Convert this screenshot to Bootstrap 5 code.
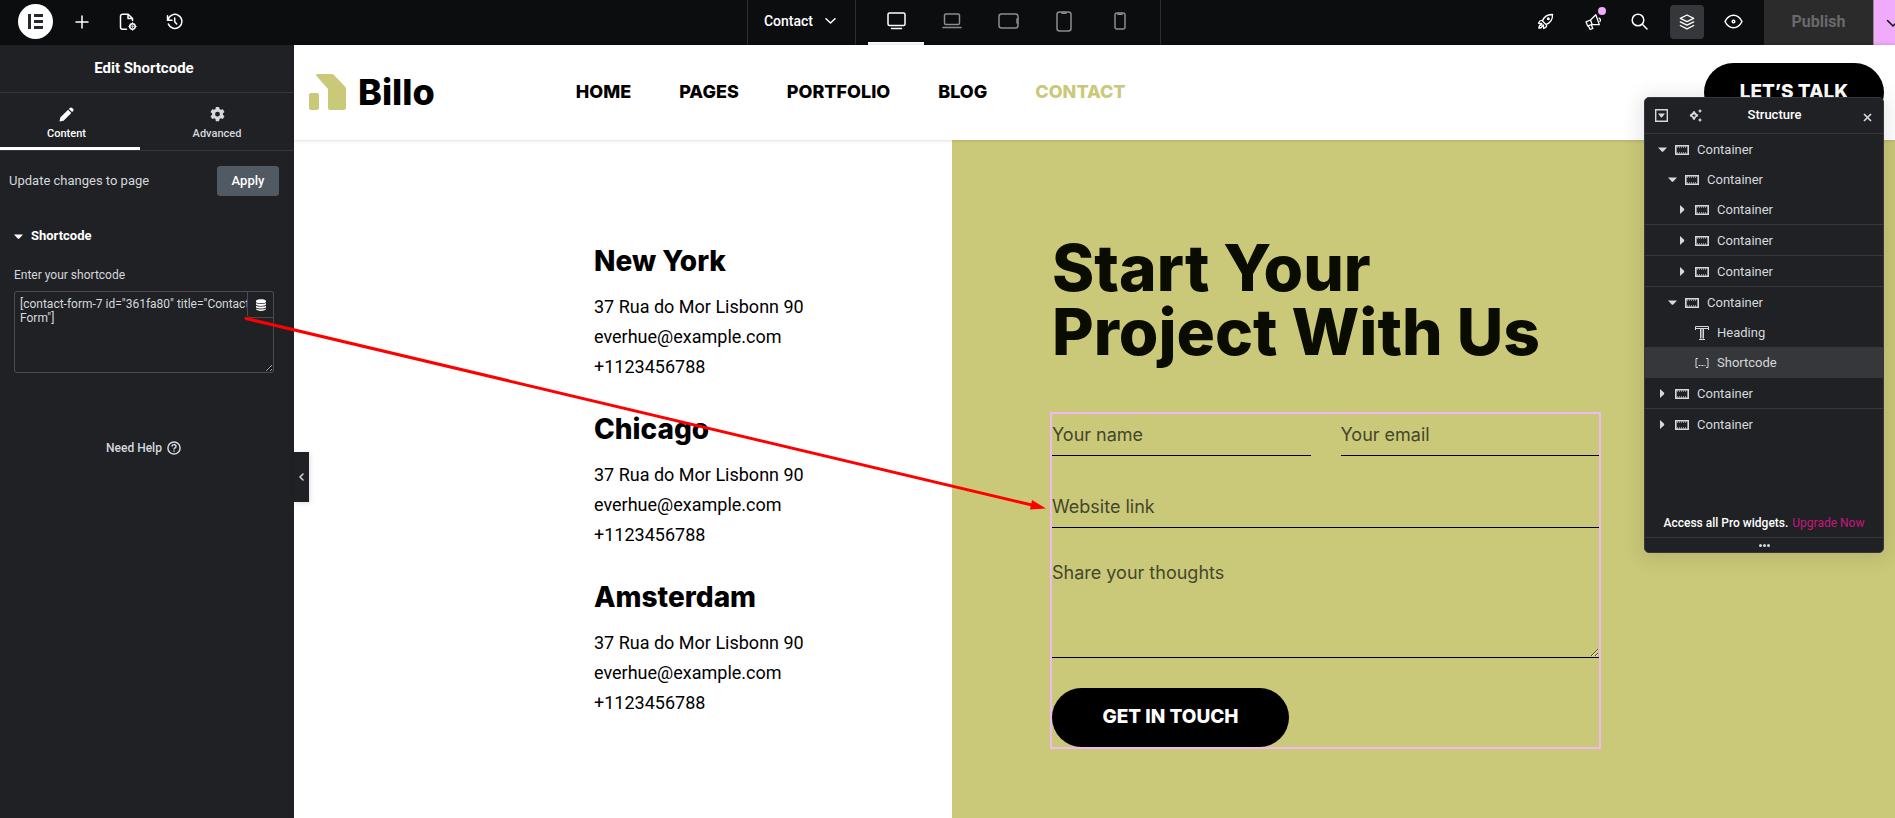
<!DOCTYPE html>
<html lang="en">
<head>
<meta charset="utf-8">
<meta name="viewport" content="width=device-width, initial-scale=1">
<title>Contact – Editor</title>
<link href="https://cdn.jsdelivr.net/npm/bootstrap@5.3.0/dist/css/bootstrap.min.css" rel="stylesheet">
<style>
:root { --olive:#cac979; --panel:#1f2124; --line:#35373b; --soft:#d5d8dc; --pink:#f0abfc; }
body { font-family:Roboto,"Liberation Sans",sans-serif; font-size:13px; color:#000; background:#fff; }
button { background:none; border:0; padding:0; color:inherit; }
a { color:inherit; text-decoration:none; }
svg { display:block; flex:none; }
.stroke-icon { fill:none; stroke:currentColor; stroke-width:1.5; stroke-linecap:round; stroke-linejoin:round; }
.wide-face { font-family:Inter,"Liberation Sans",sans-serif; font-weight:800; }

/* top bar */
.topbar { display:grid; grid-template-columns:747fr 414px 734fr; height:45px; background:#0c0d0e; color:#fff; overflow:hidden; }
.topbar-start { padding-left:18px; }
.tool { width:46px; height:43px; display:flex; align-items:center; justify-content:center; }
.brand-dot { width:35px; height:35px; margin-right:6px; }
.page-picker { width:109px; font-size:14px; font-weight:500; border:solid #2d2e30; border-width:0 1px; padding:3px 0 8px 5px; }
.devices { border-right:1px solid #2d2e30; padding-left:12px; }
.device { width:56px; height:45px; display:flex; align-items:center; justify-content:center; color:#8b8c8e; border-bottom:3px solid transparent; }
.device.active { color:#fff; border-color:#fff; }
.right-tools { margin-right:7px; }
.right-tool { width:47px; }
.tool-on { width:34px; height:34px; border-radius:4px; background:#36373a; }
.note-dot { position:absolute; top:7px; right:10px; width:8px; height:8px; border-radius:50%; background:var(--pink); }
.publish { width:109px; background:#2b2b2b; color:#69696b; font-size:16px; font-weight:700; padding-bottom:4px; }
.publish-more { width:22px; background:var(--pink); border-left:1px solid #8f8f90; color:#0c0d0e; overflow:hidden; padding-left:12px; }

/* side panel */
.side { width:294px; background:var(--panel); color:var(--soft); flex:none; position:relative; }
.side-title { height:48px; font-size:15px; font-weight:700; color:#fff; border-bottom:1px solid var(--line); padding-right:6px; }
.side-tabs { height:58px; border-bottom:1px solid var(--line); }
.side-tab { height:57px; flex:1; font-size:11px; font-weight:500; border-bottom:3px solid transparent; padding-bottom:5px; }
.side-tab.first { flex:0 0 140px; color:#fff; border-color:#fff; padding-right:7px; }
.apply { width:62px; height:30px; border-radius:3px; background:#515962; color:#fff; font-weight:500; font-size:13px; }
.update-row { padding:15px 15px 0 9px; font-size:13px; }
.section-head { color:#fff; font-weight:700; font-size:13px; line-height:20px; padding-left:14px; margin-top:30px; }
.code-label { font-size:12px; line-height:18px; margin:20px 0 7px 14px; display:block; }
.code-wrap { position:relative; margin:0 20px 0 14px; }
.code-area { width:100%; height:82px; background:transparent; border:1px solid #494b50; border-radius:3px; color:var(--soft); font-size:12px; line-height:14px; padding:5px; display:block; resize:vertical; overflow:hidden; outline:0; }
.code-btn { position:absolute; top:0; right:0; width:27px; height:27px; border:1px solid #494b50; border-radius:0 3px 0 3px; background:var(--panel); color:#fff; }
.help { margin-top:66px; font-size:12px; font-weight:500; padding-right:7px; gap:5px; }
.collapse-tab { position:absolute; left:294px; top:407px; width:15px; height:50px; background:var(--panel); color:var(--soft); z-index:3; box-shadow:1px 1px 5px #0002; }

/* edited site */
.site { min-width:0; position:relative; }
.site-head { height:95px; padding:0 11px 0 15px; box-shadow:0 0 4px #0003; position:relative; z-index:1; background:#fff; }
.site-name { font-size:36px; line-height:36px; }
.site-nav { font-size:18px; gap:48px; padding-left:141px; }
.site-nav .current { color:var(--olive); }
.brand-row { padding-bottom:2px; }
.talk, .send { background:#000; color:#fff; border-radius:30px; height:59px; font-size:19px; }
.talk { width:180px; }
.send { width:237px; margin-top:30px; }
.addresses { flex:0 0 41.1%; padding:106px 20px 60px 300px; }
.addresses h2 { font-size:28px; line-height:30px; margin:0 0 16px; }
.addresses address { font-size:18px; line-height:30px; margin:0 0 32px; }
.pitch { flex:1; background:var(--olive); padding:96px 40px 69px 98px; }
.pitch h1 { font-size:64px; line-height:64px; color:#0a0c00; margin:0 0 48px 2px; }
.contact-form { border:2px solid #efb9f3; max-width:551px; }
.field-row { gap:30px; }
.field { width:100%; background:transparent; border:0; border-bottom:1px solid #000; border-radius:0; outline:0; font:400 18px/27px Inter,sans-serif; height:42px; padding:0; display:block; color:#000; }
.field::placeholder { color:#45462b; opacity:1; }
.field-row, .field-gap { margin-bottom:30px; }
textarea.field { height:100px; padding-top:1px; resize:vertical; }

/* structure panel */
.structure { position:absolute; right:11px; top:97px; width:240px; height:456px; z-index:5; background:var(--panel); color:var(--soft); border:1px solid #35373b; border-radius:5px; box-shadow:0 2px 20px 4px #0000001a; overflow:hidden; }
.structure-head { height:36px; border-bottom:1px solid var(--line); padding:0 11px 1px 10px; }
.structure-title { font-size:13px; font-weight:500; color:#fff; flex:1; padding-right:16px; }
.smart { margin-left:21px; }
.node { height:30px; font-size:13px; padding:1px 0 0 13px; width:100%; gap:8px; }
.node.lined { height:31px; border-bottom:1px solid var(--line); }
.node.level-2 { padding-left:23px; }
.node.level-3 { padding-left:33px; }
.node.selected { background:#36373b; }
.upsell { font-size:12px; height:32px; color:#fff; font-weight:500; padding-top:3px; }
.upsell a { color:#c9167c; font-weight:400; }
.grip { height:15px; border-top:1px solid var(--line); }
.pointer-line { position:absolute; left:244px; top:315px; z-index:4; pointer-events:none; }
</style>
</head>
<body>
<svg width="0" height="0" class="position-absolute" aria-hidden="true">
  <symbol id="box" viewBox="0 0 14 10"><path fill="none" stroke="currentColor" stroke-width="1.600" d="M.8.8h12.4v8.4H.8z"/><path fill="none" stroke="currentColor" stroke-dasharray="1 1" d="M2 2.100h10M2 7.900h10"/></symbol>
  <symbol id="down" viewBox="0 0 9 9"><path fill="currentColor" d="M0 2.500h9L5.500 6.300a1.400 1.400 0 0 1-2 0z"/></symbol>
  <symbol id="right" viewBox="0 0 9 9"><path fill="currentColor" d="M2 0v9l3.800-3.500a1.400 1.400 0 0 0 0-2z"/></symbol>
</svg>

<div class="position-relative min-vh-100 d-flex flex-column">
<header class="topbar">
  <div class="topbar-start d-flex">
    <div class="d-flex align-items-center pb-1">
      <button class="brand-dot" aria-label="Menu"><svg width="35" height="35" viewBox="0 0 35 35"><circle cx="17.500" cy="17.500" r="17.500" fill="#fff"/><path fill="#26282b" d="M10 10h3v15h-3zM16 10h9v3h-9zM16 16h9v3h-9zM16 22h9v3h-9z"/></svg></button>
      <button class="tool" aria-label="Add element"><svg class="stroke-icon" width="14" height="14" viewBox="0 0 14 14"><path d="M7 1v12M1 7h12"/></svg></button>
      <button class="tool" aria-label="Page settings"><svg class="stroke-icon" width="18" height="18" viewBox="0 0 18 18"><path d="M7.500 16.300H3.500a2 2 0 0 1-2-2V3.200a2 2 0 0 1 2-2h5.700l4.300 4.300v2M9 1.500v4h4.500"/><circle cx="13.500" cy="13.500" r="2.700"/><circle cx="13.500" cy="13.500" r=".4"/><path stroke-width="1" d="M13.500 9.800v1M13.500 16.200v1M9.800 13.500h1M16.200 13.500h1"/></svg></button>
      <button class="tool" aria-label="History"><svg class="stroke-icon" width="17" height="17" viewBox="0 0 17 17"><path d="M2 7.200A7 7 0 1 1 2.400 11M1.500 2.800v4.500H6M8.700 5v3.700l2 2.300"/></svg></button>
    </div>
  </div>
  <div class="d-flex">
    <button class="page-picker d-flex align-items-center justify-content-center"><span>Contact</span><svg class="stroke-icon ms-2 me-1" width="19" height="6" viewBox="-4 0 19 6"><path d="M1 .7l4.500 4.300L10 .7"/></svg></button>
    <div class="devices d-flex flex-grow-1">
      <button class="device active" aria-label="Desktop"><svg class="stroke-icon" width="19" height="18" viewBox="0 0 19 18"><rect x="1" y="1" width="17" height="12.500" rx="1.500"/><path d="M4.500 16.500h10"/></svg></button>
      <button class="device" aria-label="Laptop"><svg class="stroke-icon" width="20" height="16" viewBox="0 0 20 16"><rect x="2.500" y="1" width="15" height="10.500" rx="1.500"/><path d="M1 14.500h18"/></svg></button>
      <button class="device" aria-label="Tablet landscape"><svg class="stroke-icon" width="21" height="16" viewBox="0 0 21 16"><rect x="1" y="1" width="19" height="14" rx="2.500"/><path d="M20 6h-1v4h1"/></svg></button>
      <button class="device" aria-label="Tablet portrait"><svg class="stroke-icon" width="16" height="21" viewBox="0 0 16 21"><rect x="1" y="1" width="14" height="19" rx="2.500"/><path d="M6 1.500v.8h4v-.8"/></svg></button>
      <button class="device" aria-label="Mobile"><svg class="stroke-icon" width="12" height="18" viewBox="0 0 12 18"><rect x="1" y="1" width="10" height="16" rx="2"/><path d="M4 1.500v.8h4v-.8"/></svg></button>
    </div>
  </div>
  <div class="d-flex justify-content-end">
    <div class="right-tools d-flex">
      <button class="tool right-tool" aria-label="What's new"><svg class="stroke-icon" width="17" height="17" viewBox="0 0 17 17"><path stroke-width="1.300" d="M5.500 8C7 3.500 10 1.300 15.500 1.500 15.700 7 13.500 10 9 11.500zM6 7L2.800 8 1.500 10.300l3.300.2M10 11l-1 3.200L6.700 15.500 6.400 12M4.500 11.500c-1.800.4-2.500 2-2.700 3.700 1.700 0 3.200-.8 3.700-2.500z"/><circle cx="11.300" cy="5.700" r=".8"/></svg></button>
      <button class="tool right-tool position-relative" aria-label="Notifications"><svg class="stroke-icon" width="18" height="18" viewBox="0 0 18 18"><path stroke-width="1.300" d="M2 8.800L6.500 7 11.800 1.800l3.500 9.800-7.300-.3-4.300 1.700zM6.500 7l1.600 4.300M4.300 12.800l1.900 3.700 2.600-1.100-1.600-3.800M15 5.200c1.500.5 1.900 2.300.9 3.200"/></svg><span class="note-dot"></span></button>
      <button class="tool right-tool" aria-label="Finder"><svg class="stroke-icon" width="17" height="17" viewBox="0 0 17 17"><circle cx="7" cy="7" r="5.800"/><path d="M11.300 11.300l4.700 4.700"/></svg></button>
      <button class="tool right-tool" aria-label="Structure"><span class="tool-on d-flex align-items-center justify-content-center"><svg class="stroke-icon" width="16" height="16" viewBox="0 0 16 16"><path stroke-width="1.300" d="M8 1L1.300 4.300 8 7.600l6.700-3.300zM1.300 7.900L8 11.200l6.700-3.300M1.300 11.500L8 14.800l6.700-3.300"/></svg></span></button>
      <button class="tool right-tool" aria-label="Preview"><svg class="stroke-icon" width="19" height="15" viewBox="0 0 19 15"><path d="M1 7.500C3 3.500 6 1.300 9.500 1.300S16 3.500 18 7.500c-2 4-5 6.200-8.500 6.200S3 11.500 1 7.500z"/><circle cx="9.500" cy="7.500" r="1.300"/></svg></button>
    </div>
    <button class="publish">Publish</button>
    <button class="publish-more" aria-label="Save options"><svg class="stroke-icon" width="14" height="9" viewBox="0 0 14 9"><path d="M1.500 1.500L7 7l5.500-5.500"/></svg></button>
  </div>
</header>

<div class="d-flex flex-grow-1">
  <aside class="side">
    <div class="side-title d-flex align-items-center justify-content-center">Edit Shortcode</div>
    <div class="side-tabs d-flex">
      <button class="side-tab first d-flex flex-column align-items-center justify-content-end gap-1"><svg width="15" height="15" viewBox="0 0 15 15" fill="currentColor"><path d="M.5 14.500l.8-4 7.800-7.800 3.200 3.200-7.800 7.800zM9.900 1.900l.9-.9a1.700 1.700 0 0 1 2.400 0l.8.800a1.700 1.700 0 0 1 0 2.400l-.9.900z"/></svg>Content</button>
      <button class="side-tab d-flex flex-column align-items-center justify-content-end gap-1"><svg width="15" height="15" viewBox="0 0 16 16" fill="currentColor"><path fill-rule="evenodd" d="M6.300 0h3.400l.5 2.200 1.300.8 2.200-.7 1.700 3-1.700 1.500v1.500l1.700 1.500-1.700 3-2.200-.7-1.300.8-.5 2.300H6.300l-.5-2.300-1.300-.8-2.200.7-1.700-3 1.700-1.500V6.800L.6 5.300l1.700-3 2.200.7 1.300-.8zM8 5a2.600 2.600 0 1 0 0 5.200A2.600 2.600 0 0 0 8 5z"/></svg>Advanced</button>
    </div>
    <div class="update-row d-flex align-items-center justify-content-between"><span>Update changes to page</span><button class="apply">Apply</button></div>
    <button class="section-head d-flex align-items-center gap-2"><svg width="9" height="9"><use href="#down"/></svg>Shortcode</button>
    <label class="code-label" for="code">Enter your shortcode</label>
    <div class="code-wrap">
      <textarea id="code" class="code-area" spellcheck="false">[contact-form-7 id="361fa80" title="Contact Form"]</textarea>
      <button class="code-btn d-flex align-items-center justify-content-center" aria-label="Dynamic tags"><svg width="10" height="12" viewBox="0 0 10 12" fill="currentColor"><path d="M0 2c0-2.500 10-2.500 10 0v.7C10 4.800 0 4.800 0 2.700zM0 4c2 1.300 8 1.300 10 0v1.600C10 7.300 0 7.300 0 5.600zM0 6.800c2 1.200 8 1.200 10 0v1.500c0 1.700-10 1.700-10 0zM0 9.500c2 1.200 8 1.200 10 0v.6c0 2.400-10 2.400-10 0z"/></svg></button>
    </div>
    <a href="#" class="help d-flex align-items-center justify-content-center"><span>Need Help</span><svg width="14" height="14" viewBox="0 0 14 14" fill="none" stroke="currentColor" stroke-width="1.500"><circle cx="7" cy="7" r="6.100"/><path d="M5 5.600C5 3 9 3 9 5.400 9 6.900 7 6.800 7 8.500M7 9.400v1.400"/></svg></a>
    <button class="collapse-tab d-flex align-items-center justify-content-center" aria-label="Hide panel"><svg class="stroke-icon" width="5" height="8" viewBox="0 0 5 8"><path d="M4 1L1 4l3 3"/></svg></button>
  </aside>

  <main class="site d-flex flex-column flex-grow-1">
    <div class="site-head d-flex align-items-center justify-content-between">
      <div class="brand-row d-flex align-items-center">
        <a href="#" class="d-flex align-items-center gap-2"><svg width="37" height="36" viewBox="0 0 37 36" fill="#cac979"><rect y="19" width="10" height="17" rx="2"/><path d="M8 0h14.500q1.500 0 2.500 1l10.500 11q1.500 1.500 1.500 3v19q0 2-2 2H21q-2 0-2-2V15L7.500 2Q6.500 0 8 0z"/></svg><span class="site-name wide-face ps-1">Billo</span></a>
        <nav class="site-nav wide-face d-flex"><a href="#">HOME</a><a href="#">PAGES</a><a href="#">PORTFOLIO</a><a href="#">BLOG</a><a href="#" class="current">CONTACT</a></nav>
      </div>
      <button class="talk wide-face">LET’S TALK</button>
    </div>
    <div class="d-flex flex-grow-1">
      <section class="addresses">
        <h2 class="wide-face">New York</h2>
        <address>37 Rua do Mor Lisbonn 90<br>everhue@example.com<br>+1123456788</address>
        <h2 class="wide-face">Chicago</h2>
        <address>37 Rua do Mor Lisbonn 90<br>everhue@example.com<br>+1123456788</address>
        <h2 class="wide-face">Amsterdam</h2>
        <address class="mb-0">37 Rua do Mor Lisbonn 90<br>everhue@example.com<br>+1123456788</address>
      </section>
      <section class="pitch">
        <h1 class="wide-face">Start Your<br>Project With Us</h1>
        <form class="contact-form" onsubmit="return false">
          <div class="field-row d-flex">
            <input class="field" type="text" placeholder="Your name" aria-label="Your name">
            <input class="field" type="email" placeholder="Your email" aria-label="Your email">
          </div>
          <input class="field field-gap" type="url" placeholder="Website link" aria-label="Website link">
          <textarea class="field" placeholder="Share your thoughts" aria-label="Share your thoughts"></textarea>
          <button class="send wide-face d-block">GET IN TOUCH</button>
        </form>
      </section>
    </div>
  </main>
</div>

<section class="structure d-flex flex-column" aria-label="Structure">
  <div class="structure-head d-flex align-items-center">
    <button aria-label="Collapse all"><svg width="13" height="13" viewBox="0 0 13 13"><path fill="none" stroke="currentColor" stroke-width="1.400" d="M.7.700h11.600v11.600H.7z"/><path fill="currentColor" d="M3 4.500h7L7.300 8a1 1 0 0 1-1.600 0z"/></svg></button>
    <button class="smart" aria-label="Smart actions"><svg width="13" height="13" viewBox="0 0 13 13"><path fill="none" stroke="currentColor" stroke-width="1.700" d="M5 2.500Q5.600 5.900 9 6.500 5.600 7.100 5 10.500 4.400 7.100 1 6.500 4.400 5.900 5 2.500z"/><path fill="currentColor" d="M11 0l.8 1.200 1.200.8-1.200.8L11 4l-.8-1.200L9 2l1.200-.8zM11 9l.8 1.200 1.200.8-1.200.8L11 13l-.8-1.200L9 11l1.200-.8z"/></svg></button>
    <span class="structure-title text-center">Structure</span>
    <button class="pt-1" aria-label="Close"><svg width="9" height="9" viewBox="0 0 9 9" fill="none" stroke="currentColor" stroke-width="1.700"><path d="M1 1l7 7M8 1L1 8"/></svg></button>
  </div>
  <div class="flex-grow-1">
    <button class="node d-flex align-items-center"><svg width="9" height="9"><use href="#down"/></svg><svg width="14" height="10"><use href="#box"/></svg>Container</button>
    <button class="node level-2 d-flex align-items-center"><svg width="9" height="9"><use href="#down"/></svg><svg width="14" height="10"><use href="#box"/></svg>Container</button>
    <button class="node level-3 lined d-flex align-items-center"><svg width="9" height="9"><use href="#right"/></svg><svg width="14" height="10"><use href="#box"/></svg>Container</button>
    <button class="node level-3 lined d-flex align-items-center"><svg width="9" height="9"><use href="#right"/></svg><svg width="14" height="10"><use href="#box"/></svg>Container</button>
    <button class="node level-3 lined d-flex align-items-center"><svg width="9" height="9"><use href="#right"/></svg><svg width="14" height="10"><use href="#box"/></svg>Container</button>
    <button class="node level-2 d-flex align-items-center"><svg width="9" height="9"><use href="#down"/></svg><svg width="14" height="10"><use href="#box"/></svg>Container</button>
    <button class="node level-3 d-flex align-items-center"><svg width="9" height="9"></svg><svg width="14" height="14" viewBox="0 0 14 14" fill="none" stroke="currentColor"><path d="M.5 4V.500h13V4M.5 2.500h13M5.500 3v9.500M7 3v9.500M8.500 3v9.500M4 13.500h6"/></svg>Heading</button>
    <button class="node level-3 lined selected d-flex align-items-center"><svg width="9" height="9"></svg><svg width="14" height="10" viewBox="0 0 14 10" fill="none" stroke="currentColor"><path d="M3 .500H1v9h2M11 .500h2v9h-2"/><path stroke-dasharray="2 1" d="M3.500 7.500h7"/></svg>Shortcode</button>
    <button class="node lined d-flex align-items-center"><svg width="9" height="9"><use href="#right"/></svg><svg width="14" height="10"><use href="#box"/></svg>Container</button>
    <button class="node d-flex align-items-center"><svg width="9" height="9"><use href="#right"/></svg><svg width="14" height="10"><use href="#box"/></svg>Container</button>
  </div>
  <div class="upsell d-flex align-items-center justify-content-center gap-1"><span>Access all Pro widgets.</span><a href="#">Upgrade Now</a></div>
  <div class="grip d-flex align-items-center justify-content-center"><svg width="11" height="3" viewBox="0 0 11 3" fill="currentColor"><circle cx="1.500" cy="1.500" r="1.500"/><circle cx="5.500" cy="1.500" r="1.500"/><circle cx="9.500" cy="1.500" r="1.500"/></svg></div>
</section>

<svg class="pointer-line" width="804" height="200" viewBox="0 0 804 200" aria-hidden="true"><path d="M2 3.500L790 190.500" stroke="#f00" stroke-width="3" stroke-linecap="round"/><path fill="#f00" d="M802 193.500L788 185l-2 9.500z"/></svg>
</div>
<script src="https://cdn.jsdelivr.net/npm/bootstrap@5.3.0/dist/js/bootstrap.bundle.min.js"></script>
</body>
</html>
